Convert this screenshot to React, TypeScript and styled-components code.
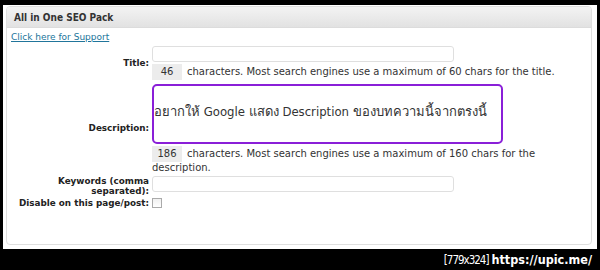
import React from 'react';
import styled, { createGlobalStyle } from 'styled-components';

const GlobalStyle = createGlobalStyle`
  html, body {
    margin: 0;
    padding: 0;
    background: #000;
  }
  body {
    width: 600px;
    height: 270px;
    overflow: hidden;
    font-family: "DejaVu Sans", Verdana, sans-serif;
  }
`;

const Screen = styled.div`
  width: 600px;
  height: 270px;
  padding: 5px 3px 0 3px;
  box-sizing: border-box;
  display: flex;
  flex-direction: column;
`;

const Frame = styled.div`
  background: #fff;
  height: 244px;
  box-sizing: border-box;
  padding: 1px 5px 4px 3px;
  display: flex;
`;

const Panel = styled.div`
  flex: 1;
  border: 1px solid #dfdfdf;
  border-radius: 4px;
  overflow: hidden;
  display: flex;
  flex-direction: column;
`;

const PanelHeader = styled.div`
  height: 20px;
  background: linear-gradient(to bottom, #f3f3f3, #e2e2e2);
  border-bottom: 1px solid #dcdcdc;
  display: flex;
  align-items: center;
  padding-left: 7px;
  font-family: "DejaVu Sans", sans-serif;
  font-stretch: condensed;
  font-size: 10px;
  font-weight: bold;
  color: #333;
`;

const PanelBody = styled.div`
  padding: 3px 4px 0 4px;
  display: flex;
  flex-direction: column;
  gap: 3px;
  font-size: 10px;
  color: #333;
`;

const SupportLink = styled.a`
  color: #21759b;
  text-decoration: underline;
  font-size: 9px;
  line-height: 12px;
`;

const Form = styled.div`
  display: grid;
  grid-template-columns: 138px 420px;
  column-gap: 3px;
  row-gap: 2px;
`;

const Label = styled.div`
  align-self: center;
  text-align: right;
  font-weight: bold;
  font-size: 8.8px;
  line-height: 10px;
  color: #222;
`;

const Cell = styled.div`
  display: flex;
  flex-direction: column;
  gap: 2px;
`;

const TextInput = styled.div`
  width: 302px;
  height: 16px;
  box-sizing: border-box;
  border: 1px solid #dfdfdf;
  border-radius: 3px;
  background: #fff;
`;

const CountLine = styled.div`
  line-height: 12px;
  color: #333;
`;

const Counter = styled.span`
  display: inline-block;
  width: 30px;
  height: 16px;
  line-height: 16px;
  background: #ececec;
  text-align: center;
  margin-right: 5px;
  vertical-align: middle;
`;

const DescriptionBox = styled.div`
  width: 351px;
  height: 60px;
  margin-top: 2px;
  box-sizing: border-box;
  border: 2px solid #8a1fd8;
  border-radius: 5px;
  display: flex;
  align-items: center;
  padding: 0 0 6px 0;
  font-family: "DejaVu Sans", "Noto Sans", sans-serif;
  font-stretch: condensed;
  font-size: 13px;
  color: #333;
  white-space: nowrap;
`;

const Checkbox = styled.span`
  display: block;
  width: 8px;
  height: 8px;
  border: 1px solid #aaa;
  background: linear-gradient(to bottom, #f0f0f0, #fff);
`;

const Caption = styled.div`
  display: flex;
  justify-content: flex-end;
  align-items: baseline;
  padding: 3px 5px 0 0;
  color: #fff;
  font-size: 13px;
`;

const Size = styled.span`
  font-family: "DejaVu Sans", sans-serif;
  font-stretch: condensed;
  font-size: 11.5px;
  letter-spacing: -1px;
  margin-right: 3px;
`;

const Site = styled.span`
  font-family: "DejaVu Sans", sans-serif;
  font-stretch: condensed;
  font-weight: bold;
  font-size: 12.5px;
`;

const App: React.FC = () => {
  return (
    <>
      <GlobalStyle />
      <Screen>
        <Frame>
          <Panel>
            <PanelHeader>All in One SEO Pack</PanelHeader>
            <PanelBody>
              <div>
                <SupportLink href="#">Click here for Support</SupportLink>
              </div>
              <Form>
                <Label>Title:</Label>
                <Cell>
                  <TextInput />
                  <CountLine>
                    <Counter>46</Counter>
                    characters. Most search engines use a maximum of 60 chars for the title.
                  </CountLine>
                </Cell>

                <Label>Description:</Label>
                <Cell>
                  <DescriptionBox>อยากให้ Google แสดง Description ของบทความนี้จากตรงนี้</DescriptionBox>
                  <CountLine>
                    <Counter>186</Counter>
                    characters. Most search engines use a maximum of 160 chars for the description.
                  </CountLine>
                </Cell>

                <Label>
                  Keywords (comma
                  <br />
                  separated):
                </Label>
                <Cell>
                  <TextInput />
                </Cell>

                <Label>Disable on this page/post:</Label>
                <Cell>
                  <Checkbox />
                </Cell>
              </Form>
            </PanelBody>
          </Panel>
        </Frame>
        <Caption>
          <Size>[779x324]</Size>
          <Site>https://upic.me/</Site>
        </Caption>
      </Screen>
    </>
  );
};

export default App;
